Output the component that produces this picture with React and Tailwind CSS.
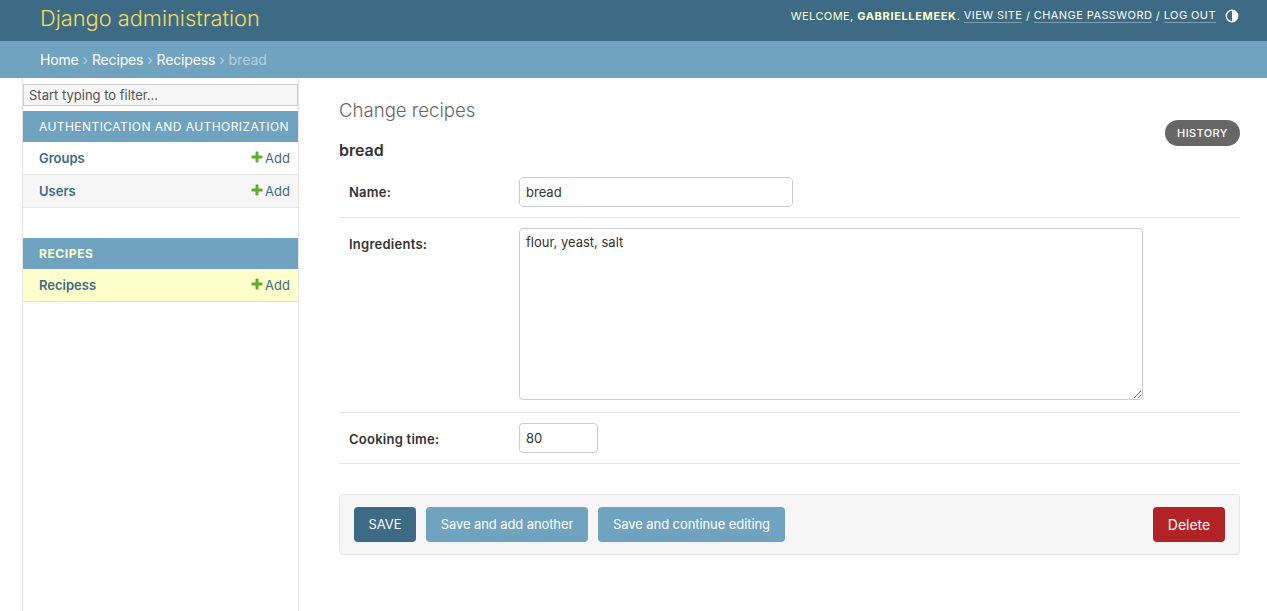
import React from 'react';

const font = { fontFamily: 'Inter, Roboto, sans-serif' };

function AddLink() {
  return (
    <a className="mb-[2px] flex items-center gap-[1px] text-[13px] leading-4 text-[#3d6a85]">
      <svg width="14" height="14" viewBox="0 0 1792 1792" className="mt-[-1px]">
        <path fill="#5fad2a" d="M1600 796v192q0 40-28 68t-68 28h-416v416q0 40-28 68t-68 28h-192q-40 0-68-28t-28-68v-416h-416q-40 0-68-28t-28-68v-192q0-40 28-68t68-28h416v-416q0-40 28-68t68-28h192q40 0 68 28t28 68v416h416q40 0 68 28t28 68z" />
      </svg>
      Add
    </a>
  );
}

function ModelRow({ name, className }) {
  return (
    <div className={`flex h-[33px] items-center justify-between border-b border-[#e5e5e5] pl-4 pr-2 pt-[1px] ${className}`}>
      <span className="text-[13px] font-semibold text-[#3d6a85]">{name}</span>
      <AddLink />
    </div>
  );
}

function Caption({ children, className }) {
  return (
    <div className={`flex items-center bg-[#6fa3c0] pl-4 text-[12px] ${className}`}>
      {children}
    </div>
  );
}

function Sep() {
  return <span className="whitespace-pre text-[#b9d0dd]"> › </span>;
}

export default function App() {
  return (
    <div className="flex min-h-[611px] flex-col bg-white text-[#333]" style={font}>
      <header className="flex h-[41px] items-center justify-between bg-[#3d6a85] pl-10 pr-[28px]">
        <h1 className="mb-[5px] text-[21.8px] font-light leading-[30px] text-[#f5dd5d]">Django administration</h1>
        <div className="mb-[9px] flex items-center text-[11px] tracking-[0.42px] text-[#ffffcc]">
          <span>WELCOME, <strong className="font-bold tracking-[0.65px]">GABRIELLEMEEK</strong>.&nbsp;</span>
          <a className="border-b border-[#7d9fb3] leading-[13px] text-white">VIEW SITE</a>
          <span>&nbsp;/&nbsp;</span>
          <a className="border-b border-[#7d9fb3] leading-[13px] text-white">CHANGE PASSWORD</a>
          <span>&nbsp;/&nbsp;</span>
          <a className="border-b border-[#7d9fb3] leading-[13px] text-white">LOG OUT</a>
          <svg width="14" height="14" viewBox="0 0 14 14" className="ml-[9px]">
            <circle cx="7" cy="7" r="5.7" fill="none" stroke="#fff" strokeWidth="1.4" />
            <path d="M7 1.3a5.7 5.7 0 0 1 0 11.4z" fill="#fff" />
          </svg>
        </div>
      </header>

      <nav className="flex h-[37px] items-center bg-[#6fa3c0] pl-10 text-[14px] text-[#b9d0dd]">
        <a className="tracking-[-0.15px] text-white">Home</a>
        <Sep />
        <a className="tracking-[-0.15px] text-white">Recipes</a>
        <Sep />
        <a className="tracking-[-0.15px] text-white">Recipess</a>
        <Sep />
        <span>bread</span>
      </nav>

      <div className="flex flex-1">
        <aside className="ml-[22px] w-[277px] border-x border-[#e5e5e5] pt-[6px]">
          <input
            readOnly
            placeholder="Start typing to filter..."
            className="block h-[22px] w-full border border-[#cccccc] bg-[#f6f6f6] px-[5px] text-[13px] text-[#333] placeholder:text-[#555] outline-none"
          />
          <Caption className="mt-[5px] h-[31px] tracking-[0.43px] text-white">AUTHENTICATION AND AUTHORIZATION</Caption>
          <ModelRow name="Groups" className="bg-white" />
          <ModelRow name="Users" className="bg-[#f6f6f6]" />
          <Caption className="mt-[30px] h-[31px] font-bold tracking-[0.6px] text-[#ffffcc]">RECIPES</Caption>
          <ModelRow name="Recipess" className="bg-[#ffffcc]" />
        </aside>

        <main className="ml-10 mr-[27px] flex-1 pt-[20px]">
          <h1 className="text-[18.6px] font-light leading-6 text-[#666]">Change recipes</h1>
          <div className="flex justify-end">
            <a className="mt-[-2px] flex h-[26px] w-[75px] items-center justify-center rounded-[15px] bg-[#666] text-[11px] font-medium tracking-[0.4px] text-white">
              HISTORY
            </a>
          </div>
          <h2 className="mt-[-6px] text-[16px] font-semibold leading-5 text-[#333]">bread</h2>

          <div className="flex h-[58px] items-start border-b border-[#e5e5e5] pl-[10px] pt-[17px]">
            <label className="w-[170px] pt-[6px] text-[13px] font-semibold tracking-[0.25px]">Name:</label>
            <input
              readOnly
              value="bread"
              className="h-[30px] w-[274px] rounded-[4px] border border-[#cccccc] px-[6px] text-[13px] outline-none"
            />
          </div>
          <div className="flex h-[195px] items-start border-b border-[#e5e5e5] pl-[10px] pt-[10px]">
            <label className="w-[170px] pt-[7px] text-[13px] font-semibold tracking-[0.25px]">Ingredients:</label>
            <textarea
              readOnly
              value="flour, yeast, salt"
              className="h-[172px] w-[624px] rounded-[4px] border border-[#cccccc] px-[6px] py-[4px] text-[13px] outline-none"
            />
          </div>
          <div className="flex h-[51px] items-start border-b border-[#e5e5e5] pl-[10px] pt-[10px]">
            <label className="w-[170px] pt-[7px] text-[13px] font-semibold tracking-[0.25px]">Cooking time:</label>
            <input
              readOnly
              value="80"
              className="h-[30px] w-[79px] rounded-[4px] border border-[#cccccc] px-[6px] text-[13px] outline-none"
            />
          </div>

          <div className="mt-[30px] flex h-[61px] items-center gap-[10px] rounded-[4px] border border-[#e5e5e5] bg-[#f6f6f6] px-[14px] text-[13px] text-white">
            <button className="h-[35px] w-[62px] rounded-[4px] bg-[#3d6a85]">SAVE</button>
            <button className="h-[35px] w-[162px] rounded-[4px] bg-[#6fa3c0] tracking-[-0.1px]">Save and add another</button>
            <button className="h-[35px] w-[187px] rounded-[4px] bg-[#6fa3c0] tracking-[-0.08px]">Save and continue editing</button>
            <button className="ml-auto h-[35px] w-[72px] rounded-[4px] bg-[#b22326] text-[14px]">Delete</button>
          </div>
        </main>
      </div>
    </div>
  );
}
